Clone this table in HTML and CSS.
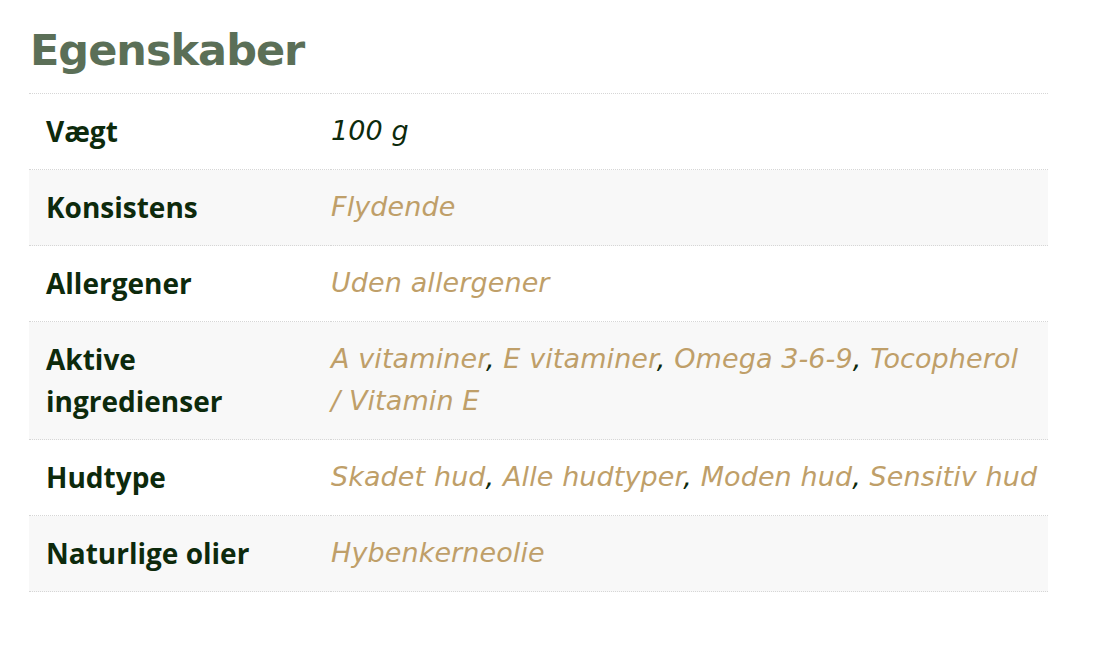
FILE: index.html
```html
<!DOCTYPE html>
<html lang="da">
<head>
<meta charset="utf-8">
<title>Egenskaber</title>
<link rel="stylesheet" href="styles.css">
</head>
<body>
<section class="props">
  <h2 class="props-title">Egenskaber</h2>
  <table class="props-table">
    <tbody>
      <tr class="row">
        <th class="label">Vægt</th>
        <td class="value plain">100 g</td>
      </tr>
      <tr class="row alt">
        <th class="label">Konsistens</th>
        <td class="value"><a class="link">Flydende</a></td>
      </tr>
      <tr class="row">
        <th class="label">Allergener</th>
        <td class="value"><a class="link">Uden allergener</a></td>
      </tr>
      <tr class="row alt">
        <th class="label">Aktive ingredienser</th>
        <td class="value"><a class="link">A vitaminer</a>, <a class="link">E vitaminer</a>, <a class="link">Omega 3-6-9</a>, <a class="link">Tocopherol /&nbsp;Vitamin E</a></td>
      </tr>
      <tr class="row">
        <th class="label">Hudtype</th>
        <td class="value"><a class="link">Skadet hud</a>, <a class="link">Alle hudtyper</a>, <a class="link">Moden hud</a>, <a class="link">Sensitiv hud</a></td>
      </tr>
      <tr class="row alt">
        <th class="label">Naturlige olier</th>
        <td class="value"><a class="link">Hybenkerneolie</a></td>
      </tr>
    </tbody>
  </table>
</section>
</body>
</html>
```

FILE: styles.css
```css
* { box-sizing: border-box; }
html, body {
  margin: 0;
  padding: 0;
  background: #ffffff;
}
body {
  font-family: "Open Sans", "Liberation Sans", sans-serif;
}
.props {
  padding: 22px 46px 0 29px;
}
.props-title {
  margin: 0 0 14px 1px;
  font-family: "DejaVu Sans", "Liberation Sans", sans-serif;
  font-weight: 700;
  font-size: 43px;
  line-height: 57px;
  color: #5b6f57;
  letter-spacing: -1px;
}
.props-table {
  width: 1019px;
  border-collapse: collapse;
  border-top: 1px dotted #d6d6d6;
}
.row {
  border-bottom: 1px dotted #d6d6d6;
}
.row.alt { background: #f8f8f8; }
.label {
  width: 302px;
  padding: 16px 20px 17px 17px;
  text-align: left;
  vertical-align: top;
  font-family: "Open Sans", "Liberation Sans", sans-serif;
  font-weight: 700;
  font-size: 28px;
  line-height: 42px;
  color: #0d2a0c;
}
.value {
  padding: 16px 8px 17px 0;
  vertical-align: top;
  font-family: "DejaVu Sans", "Liberation Sans", sans-serif;
  font-style: italic;
  font-size: 27px;
  letter-spacing: 0.1px;
  line-height: 42px;
  color: #0d2a0c;
}
.link {
  color: #bf9f69;
  text-decoration: none;
}
```
